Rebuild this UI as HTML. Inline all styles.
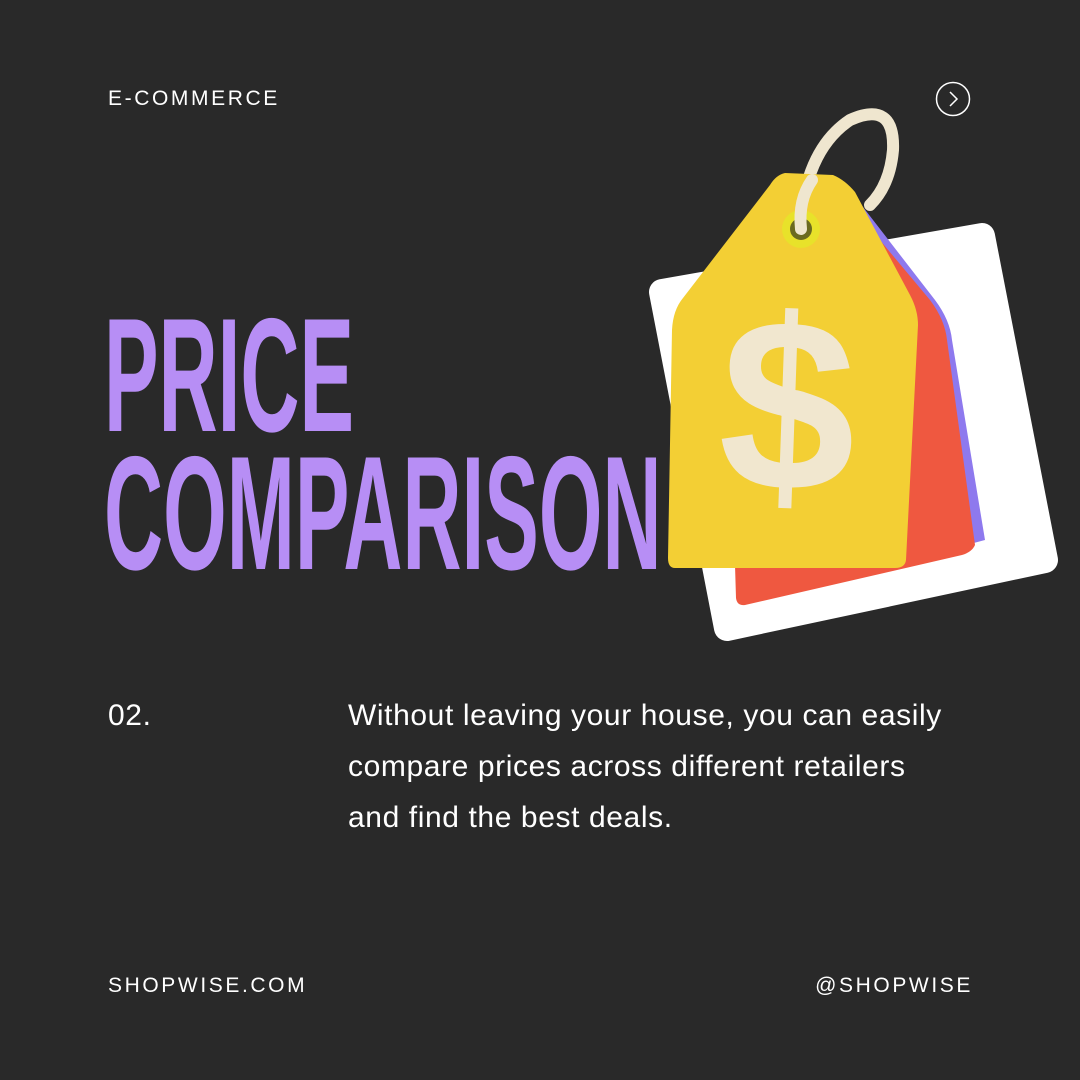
<!DOCTYPE html>
<html><head><meta charset="utf-8"><style>
body{margin:0;width:1080px;height:1080px;background:#292929;overflow:hidden;position:relative;font-family:"Liberation Sans",sans-serif;color:#fff}
.a{position:absolute;white-space:nowrap}
.small{font-size:21px;letter-spacing:2.6px}
.t{font-weight:bold;color:#b78ef5;font-size:162px;line-height:1;transform-origin:0 0;transform:scaleX(0.505)}
.body{font-size:30px;line-height:51px;letter-spacing:0.6px}
</style></head><body>
<div class="a small" style="left:108px;top:87px">E-COMMERCE</div>
<svg class="a" style="left:935px;top:81px" width="36" height="36"><circle cx="18" cy="18" r="16.5" fill="none" stroke="#fff" stroke-width="1.5"/><path d="M15 11 L22 18 L15 25" fill="none" stroke="#fff" stroke-width="1.5"/></svg>

<svg class="a" style="left:0;top:0" width="1080" height="1080">
<polygon points="662,292 982,236 1045,560 727,628" fill="#fff" stroke="#fff" stroke-width="26" stroke-linejoin="round"/>
<path d="M842,180 L935,300 Q950,320 952,340 L985,540 L955,548 L830,200Z" fill="#8e79ee"/>
<path d="M828,178 L930,300 Q945,320 947,340 L975,545 Q972,552 962,555 L745,605 Q737,606 736,598 L730,400 Z" fill="#ef5840"/>
<path d="M800,228 Q805,150 850,120 Q895,100 893,150 Q890,185 870,205" fill="none" stroke="#efe6cf" stroke-width="12" stroke-linecap="round"/>
<path d="M785,173 L833,175 Q845,180 855,192 L910,295 Q918,310 918,325 L906,560 Q905,568 895,568 L675,568 Q668,568 668,558 L672,330 Q673,310 683,298 L770,185 Q776,175 785,173Z" fill="#f3cf34"/>
<circle cx="801" cy="229" r="19" fill="#e8e22a"/><circle cx="801" cy="229" r="11" fill="#6b6a20"/>
<path d="M801,229 Q798,200 812,180" fill="none" stroke="#efe6cf" stroke-width="12" stroke-linecap="round"/>
<text x="788" y="490" text-anchor="middle" font-family="Liberation Sans" font-weight="bold" font-size="245" fill="#f1e7cf" transform="rotate(2 788 400)">$</text>
</svg>

<div class="a t" style="left:104px;top:295px">PRICE</div>
<div class="a t" style="left:104px;top:433px">COMPARISON</div>

<div class="a body" style="left:108px;top:690px">02.</div>
<div class="a body" style="left:348px;top:690px">Without leaving your house, you can easily<br>compare prices across different retailers<br>and find the best deals.</div>

<div class="a small" style="left:108px;top:974px">SHOPWISE.COM</div>
<div class="a small" style="right:107px;top:974px">@SHOPWISE</div>
</body></html>
